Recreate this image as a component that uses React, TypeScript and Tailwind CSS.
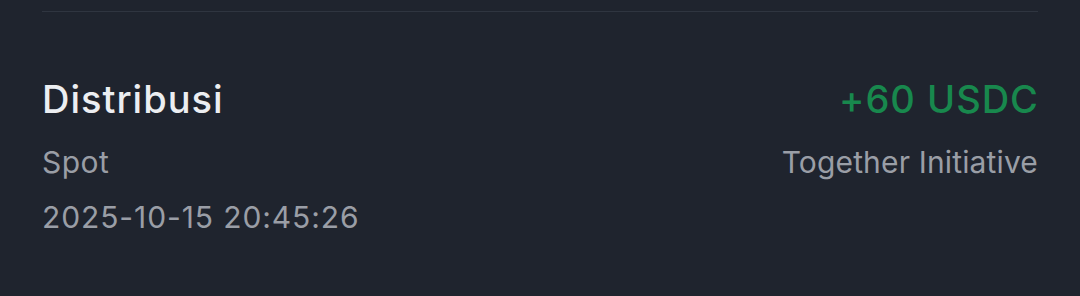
import React from 'react';

const font = { fontFamily: '"Inter", "Open Sans", sans-serif' };

export default function App() {
    return (
        <div className="w-[1080px] h-[296px] bg-[#1f242e] overflow-hidden" style={font}>
            {/* divider from previous row */}
            <div className="mx-[42px] h-[12px] border-b border-[#2f3540]"></div>
            <div className="flex justify-between px-[42px] pt-[65px]">
                <div className="flex flex-col">
                    <div className="text-[38px] leading-[44px] font-medium tracking-[1px] text-[#eceef1]">Distribusi</div>
                    <div className="text-[30px] leading-[36px] tracking-[0.5px] text-[#9a9ea6] mt-[23px]">Spot</div>
                    <div className="text-[30px] leading-[36px] tracking-[0.9px] text-[#9a9ea6] mt-[19px]">2025-10-15 20:45:26</div>
                </div>
                <div className="flex flex-col items-end">
                    <div className="text-[38px] leading-[44px] font-medium tracking-[1px] text-[#18884d] -mr-[1px]">+60 USDC</div>
                    <div className="text-[30px] leading-[36px] tracking-[0.15px] text-[#9a9ea6] mt-[23px]">Together Initiative</div>
                </div>
            </div>
        </div>
    );
}
